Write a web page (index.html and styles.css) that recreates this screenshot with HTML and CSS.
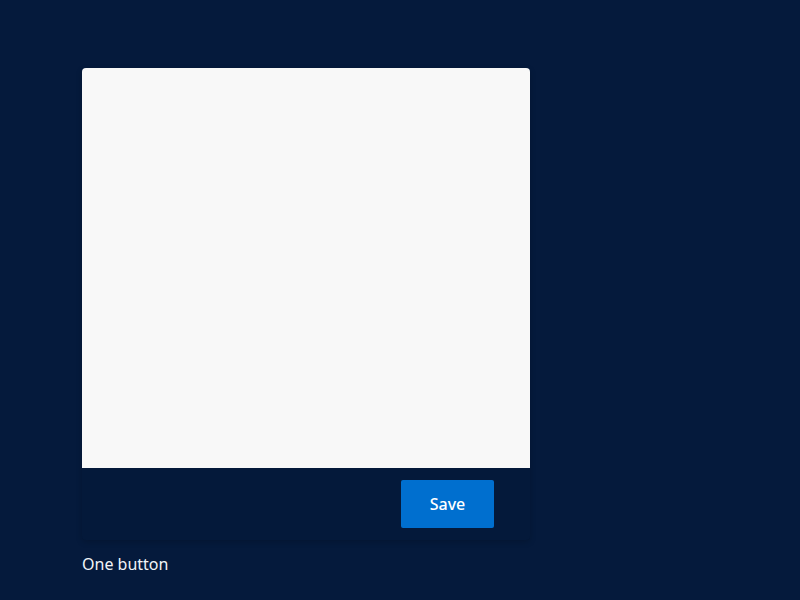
FILE: index.html
```html
<!DOCTYPE html>
<html>
<head>
<meta charset="utf-8">
<link rel="stylesheet" href="styles.css">
</head>
<body>
<div class="page">
  <div class="card">
    <div class="card-body"></div>
    <div class="card-footer">
      <button class="btn-primary">Save</button>
    </div>
  </div>
  <div class="caption">One button</div>
</div>
</body>
</html>
```
FILE: styles.css
```css
html, body {
  margin: 0;
  padding: 0;
  background: #051a3c;
  height: 100%;
}
body {
  font-family: "Noto Sans", "Lato", sans-serif;
}
.page {
  padding: 68px 0 0 82px;
}
.card {
  width: 448px;
  border-radius: 4px;
  overflow: hidden;
  background: #04193a;
  box-shadow: 0 2px 6px rgba(0, 0, 0, 0.18);
}
.card-body {
  height: 400px;
  background: #f8f8f8;
}
.card-footer {
  display: flex;
  justify-content: flex-end;
  padding: 12px 36px;
}
.btn-primary {
  width: 93px;
  height: 48px;
  border: none;
  border-radius: 2px;
  background: #006fcf;
  color: #ffffff;
  font-family: "Noto Sans", "Lato", sans-serif;
  font-size: 16px;
  font-weight: 500;
  line-height: 20px;
  padding: 0;
  cursor: pointer;
}
.caption {
  margin-top: 14px;
  color: #f2f4f8;
  font-size: 16px;
  line-height: 20px;
}
```
